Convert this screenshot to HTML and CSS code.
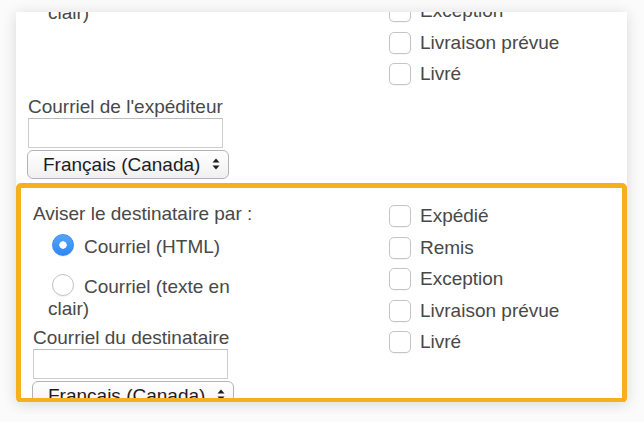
FILE: index.html
```html
<!DOCTYPE html>
<html lang="fr">
	<head>
		<meta charset="UTF-8" />
		<meta name="viewport" content="width=device-width, initial-scale=1.0" />
		<title>Notifications d'expédition</title>
		<link rel="stylesheet" href="styles.css">
	</head>
	<body>
		<div class="panel">
			<!-- Sender notifications (scrolled mostly out of view) -->
			<section class="notify notify--sender">
				<div class="notify-by">
					<p class="notify-title">Aviser l'expéditeur par :</p>
					<div class="choices">
						<label class="choice"><input type="radio" name="sender-format" checked>Courriel (HTML)</label>
						<label class="choice"><input type="radio" name="sender-format">Courriel (texte en clair)</label>
					</div>
				</div>
				<div class="checks">
					<label class="check"><input type="checkbox">Expédié</label>
					<label class="check"><input type="checkbox">Remis</label>
					<label class="check"><input type="checkbox">Exception</label>
					<label class="check"><input type="checkbox">Livraison prévue</label>
					<label class="check"><input type="checkbox">Livré</label>
				</div>
			</section>

			<div class="field field--sender">
				<label class="field-label" for="sender-email">Courriel de l'expéditeur</label>
				<input class="text-input" id="sender-email" type="text">
				<div class="select-wrap">
					<select class="lang-select">
						<option>Français (Canada)</option>
					</select>
					<svg class="select-arrows" viewBox="0 0 8 14" aria-hidden="true">
						<path d="M4 1.5 7.5 5.5H.5Z" />
						<path d="M4 12.5 7.5 8.5H.5Z" />
					</svg>
				</div>
			</div>

			<!-- Recipient notifications (highlighted) -->
			<section class="notify notify--active">
				<div class="notify-by">
					<p class="notify-title">Aviser le destinataire par :</p>
					<div class="choices">
						<label class="choice"><input type="radio" name="recipient-format" checked>Courriel (HTML)</label>
						<label class="choice"><input type="radio" name="recipient-format">Courriel (texte en clair)</label>
					</div>
					<div class="field">
						<label class="field-label" for="recipient-email">Courriel du destinataire</label>
						<input class="text-input" id="recipient-email" type="text">
						<div class="select-wrap">
							<select class="lang-select">
								<option>Français (Canada)</option>
							</select>
							<svg class="select-arrows" viewBox="0 0 8 14" aria-hidden="true">
								<path d="M4 1.5 7.5 5.5H.5Z" />
								<path d="M4 12.5 7.5 8.5H.5Z" />
							</svg>
						</div>
					</div>
				</div>
				<div class="checks">
					<label class="check"><input type="checkbox">Expédié</label>
					<label class="check"><input type="checkbox">Remis</label>
					<label class="check"><input type="checkbox">Exception</label>
					<label class="check"><input type="checkbox">Livraison prévue</label>
					<label class="check"><input type="checkbox">Livré</label>
				</div>
			</section>
		</div>
	</body>
</html>
```

FILE: styles.css
```css
* {
	margin: 0;
	padding: 0;
	box-sizing: border-box;
}

body {
	font-family: "Liberation Sans", Arial, sans-serif;
	font-size: 19px;
	line-height: 22px;
	color: #484848;
	background-color: #fbfbfb;
	padding: 12px 16px;
}

.panel {
	width: 611px;
	height: 390px;
	overflow: hidden;
	background: white;
	box-shadow: 0 2px 14px rgba(0, 0, 0, 0.14);
}

/* Notification block: method on the left, events on the right */
.notify {
	display: grid;
	grid-template-columns: 230px 1fr;
	column-gap: 126px;
	align-items: start;
	padding: 15px 12px 0;
	border: 5px solid transparent;
	border-radius: 5px;
}

.notify--sender {
	margin-top: -125.5px;
}

.notify--sender .checks {
	padding-top: 30.5px;
}

.notify--active {
	height: 220px;
	overflow: hidden;
	border-color: #f6b01e;
}

.notify-title {
	margin: 0;
}

.choices {
	margin: 10px 0 7px;
	padding-left: 15px;
}

.choice {
	display: block;
}

.choice + .choice {
	margin-top: 18px;
}

/* negative top margin keeps the 22px circle inside the 22px line */
.choice input {
	appearance: none;
	-webkit-appearance: none;
	width: 22px;
	height: 22px;
	margin: -1px 10px 0 4px;
	vertical-align: -3.5px;
	border-radius: 50%;
	border: 1px solid #c4c4c4;
	background: white;
	box-shadow: 0 1px 1px rgba(0, 0, 0, 0.05);
}

.choice input:checked {
	border-color: #3a8ef2;
	background: radial-gradient(circle, #fff 0 3.4px, transparent 4px), linear-gradient(#55a5fb, #2f87f2);
}

.checks {
	display: flex;
	flex-direction: column;
	gap: 9.5px;
	padding-top: 2.5px;
}

.check {
	display: flex;
	align-items: center;
	gap: 9px;
	line-height: 22px;
}

.check input {
	appearance: none;
	-webkit-appearance: none;
	flex: none;
	width: 22px;
	height: 22px;
	margin: 0;
	border: 1px solid #c4c4c4;
	border-radius: 5px;
	background: white;
	box-shadow: 0 1px 1px rgba(0, 0, 0, 0.04);
}

/* Email + language */
.field--sender {
	padding: 5.5px 12px 4px;
}

.field-label {
	display: block;
}

.text-input {
	display: block;
	width: 195px;
	height: 30px;
	border: 1px solid #cdcdcd;
	border-top-color: #bdbdbd;
	background: white;
	font: inherit;
}

.select-wrap {
	position: relative;
	width: 202px;
	margin: 2px 0 0 -1px;
}

.lang-select {
	appearance: none;
	-webkit-appearance: none;
	display: block;
	width: 100%;
	height: 29px;
	padding: 0 0 0 15px;
	border: 1px solid #b3b3b3;
	border-radius: 6px;
	background: linear-gradient(#ffffff, #f0f0f0);
	font-family: "Liberation Sans", Arial, sans-serif;
	font-size: 19px;
	color: #1d1d1d;
}

.select-arrows {
	position: absolute;
	top: 7px;
	right: 9px;
	width: 8px;
	height: 14px;
	fill: #1d1d1d;
}
```
